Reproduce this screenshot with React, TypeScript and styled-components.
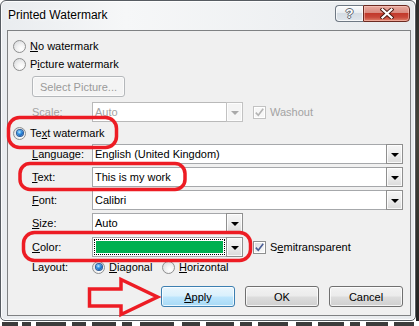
import React from "react";
import styled, { createGlobalStyle } from "styled-components";

const GlobalStyle = createGlobalStyle`
  html, body { margin: 0; padding: 0; background: #fff; }
  body {
    font-family: "Liberation Sans", Arial, sans-serif;
    font-size: 11px;
    color: #000;
    overflow: hidden;
  }
`;

const Page = styled.div`
  position: relative;
  width: 419px;
  height: 326px;
  overflow: hidden;
  display: grid;
  grid-template-columns: 416px 3px;
  grid-template-rows: 321px 5px;
  background: #fff;
`;

const Window = styled.div`
  box-sizing: border-box;
  border: 1px solid #575c62;
  border-radius: 6px 6px 5px 5px;
  background: linear-gradient(90deg, #e9ecef 0%, #f6f7f8 30%, #eef0f2 70%, #e7eaed 100%);
  box-shadow: inset 0 0 0 1px rgba(255, 255, 255, 0.85);
  display: flex;
  flex-direction: column;
  padding: 0 4px 4px 6px;
`;

const RightStrip = styled.div`
  background: linear-gradient(180deg, #2c2c2c, #46433a 40%, #222 100%);
`;

const BottomStrip = styled.div`
  grid-column: 1 / span 2;
  overflow: hidden;
  background: #fff;
  display: flex;
`;

const TitleBar = styled.div`
  height: 29px;
  display: flex;
  align-items: flex-start;
`;

const Title = styled.div`
  margin-left: 1px;
  font-size: 12px;
  line-height: 28px;
  color: #000;
  text-shadow: 0 0 6px #fff, 0 0 3px #fff;
`;

const CaptionGroup = styled.div`
  display: flex;
  margin: 4px 1px 0 auto;
`;

const HelpButton = styled.div`
  box-sizing: border-box;
  width: 28px;
  height: 17px;
  border: 1px solid #6e7883;
  border-right: none;
  border-radius: 4px 0 0 4px;
  background: linear-gradient(180deg, #fbfcfd 0%, #e9edf1 45%, #d5dce3 50%, #e0e6ec 100%);
  box-shadow: inset 0 0 0 1px rgba(255, 255, 255, 0.7);
  display: flex;
  align-items: center;
  justify-content: center;
  font-size: 13px;
  font-weight: bold;
  color: #fff;
  text-shadow: 1px 0 0 #5d6670, -1px 0 0 #5d6670, 0 1px 0 #5d6670, 0 -1px 0 #5d6670;
`;

const CloseButton = styled.div`
  box-sizing: border-box;
  width: 47px;
  height: 17px;
  border: 1px solid #6b2a22;
  border-radius: 0 4px 4px 0;
  background: linear-gradient(180deg, #e8aaa0 0%, #d98a7f 45%, #c2392b 50%, #c8483a 75%, #e0826c 100%);
  box-shadow: inset 0 0 0 1px rgba(255, 210, 200, 0.5);
  display: flex;
  align-items: center;
  justify-content: center;
`;

const Client = styled.div`
  flex: 1;
  box-sizing: border-box;
  border: 1px solid #7f8183;
  background: #f0f0f0;
  padding: 6px 7px 0 5px;
  display: flex;
  flex-direction: column;
`;

const RadioRow = styled.div<{ $mt?: number }>`
  height: 18px;
  margin-top: ${(p) => p.$mt ?? 0}px;
  display: flex;
  align-items: center;
  gap: 4px;
`;

const RadioDot = styled.span<{ $checked?: boolean }>`
  box-sizing: border-box;
  flex: none;
  width: 13px;
  height: 13px;
  border-radius: 50%;
  border: 1px solid #8e8f8f;
  background: radial-gradient(circle at 65% 70%, #ffffff 0%, #f4f4f4 35%, #d2d4d7 100%);
  display: flex;
  align-items: center;
  justify-content: center;
  &::after {
    content: "";
    display: ${(p) => (p.$checked ? "block" : "none")};
    width: 6px;
    height: 6px;
    border-radius: 50%;
    background: radial-gradient(circle at 40% 35%, #c9ecff 0%, #3b9be8 35%, #0d55b0 75%, #0a3a80 100%);
    box-shadow: 0 0 0 1px #2a5c9a;
  }
`;

const Text = styled.span<{ $disabled?: boolean }>`
  color: ${(p) => (p.$disabled ? "#a3a3a3" : "#000")};
  white-space: nowrap;
  line-height: 14px;
`;

const Indented = styled.div<{ $mt?: number }>`
  margin-top: ${(p) => p.$mt ?? 0}px;
  padding-left: 19px;
  display: flex;
`;

const PushButton = styled.div<{ $disabled?: boolean; $default?: boolean; $w: number }>`
  box-sizing: border-box;
  width: ${(p) => p.$w}px;
  height: 21px;
  border-radius: 3px;
  border: 1px solid ${(p) => (p.$disabled ? "#b5b8bb" : p.$default ? "#3c7fb1" : "#707070")};
  background: ${(p) =>
    p.$disabled
      ? "#f4f4f4"
      : p.$default
      ? "linear-gradient(180deg, #eaf6fd 0%, #d9f0fc 48%, #bee6fd 52%, #a7d9f5 100%)"
      : "linear-gradient(180deg, #f2f2f2 0%, #ebebeb 48%, #dddddd 52%, #cfcfcf 100%)"};
  box-shadow: inset 0 0 0 1px ${(p) => (p.$disabled ? "#fbfbfb" : "rgba(255,255,255,0.75)")};
  display: flex;
  align-items: center;
  justify-content: center;
  color: ${(p) => (p.$disabled ? "#9a9a9a" : "#000")};
  white-space: nowrap;
`;

const FieldRow = styled.div<{ $mt?: number; $h?: number }>`
  margin-top: ${(p) => p.$mt ?? 0}px;
  height: ${(p) => p.$h ?? 20}px;
  padding-left: 19px;
  display: flex;
  align-items: center;
`;

const Label = styled.span<{ $disabled?: boolean }>`
  flex: none;
  width: 60px;
  color: ${(p) => (p.$disabled ? "#a3a3a3" : "#000")};
  white-space: nowrap;
`;

const Combo = styled.div<{ $w?: number; $disabled?: boolean }>`
  box-sizing: border-box;
  ${(p) => (p.$w ? `width: ${p.$w}px; flex: none;` : "flex: 1;")}
  height: 20px;
  border: 1px solid ${(p) => (p.$disabled ? "#b9b9b9" : "#a6a8ab")};
  background: #fff;
  display: flex;
  align-items: stretch;
`;

const ComboValue = styled.div<{ $disabled?: boolean }>`
  flex: 1;
  padding-left: 2px;
  display: flex;
  align-items: center;
  white-space: nowrap;
  overflow: hidden;
  color: ${(p) => (p.$disabled ? "#a3a3a3" : "#000")};
`;

const SwatchFrame = styled.div`
  flex: 1;
  margin: 1px;
  border: 1px dotted #000;
  padding: 1px;
  display: flex;
`;

const Swatch = styled.div`
  flex: 1;
  background: #00b050;
`;

const DropButton = styled.div<{ $disabled?: boolean }>`
  box-sizing: border-box;
  flex: none;
  width: 17px;
  border: 1px solid ${(p) => (p.$disabled ? "#c2c2c2" : "#8f8f8f")};
  margin: -1px -1px -1px 0;
  background: ${(p) =>
    p.$disabled ? "#f4f4f4" : "linear-gradient(180deg, #f6f6f6 0%, #ececec 50%, #dadada 100%)"};
  box-shadow: inset 0 0 0 1px rgba(255, 255, 255, 0.8);
  display: flex;
  align-items: center;
  justify-content: center;
  &::after {
    content: "";
    margin-top: 2px;
    border-left: 4px solid transparent;
    border-right: 4px solid transparent;
    border-top: 4px solid ${(p) => (p.$disabled ? "#a8a8a8" : "#000")};
  }
`;

const CheckWrap = styled.div`
  display: flex;
  align-items: center;
  gap: 4px;
  margin-left: 10px;
`;

const CheckBox = styled.span<{ $disabled?: boolean }>`
  box-sizing: border-box;
  flex: none;
  width: 13px;
  height: 13px;
  border: 1px solid ${(p) => (p.$disabled ? "#c2c2c2" : "#8e8f8f")};
  background: ${(p) =>
    p.$disabled ? "#f7f7f7" : "linear-gradient(135deg, #d7dade 0%, #f0f1f2 60%, #fbfbfb 100%)"};
  box-shadow: inset 0 0 0 1px #fff;
  display: flex;
  align-items: center;
  justify-content: center;
`;

const LayoutOption = styled.div<{ $w?: number }>`
  display: flex;
  align-items: center;
  gap: 4px;
  ${(p) => (p.$w ? `width: ${p.$w}px;` : "")}
`;

const ButtonRow = styled.div`
  margin-top: 10px;
  display: flex;
  justify-content: flex-end;
  gap: 10px;
`;

const Overlay = styled.svg`
  position: absolute;
  left: 0;
  top: 0;
  pointer-events: none;
`;

const Check = ({ color }: { color: string }) => (
  <svg width="11" height="11" viewBox="0 0 11 11">
    <path d="M1.8 5.6 L4.3 8.3 L9.2 1.8" fill="none" stroke={color} strokeWidth="1.6" strokeLinejoin="miter" />
  </svg>
);

const CloseGlyph = () => (
  <svg width="14" height="11" viewBox="0 0 14 11">
    <path d="M2.5 1.5 L11.5 9.5 M11.5 1.5 L2.5 9.5" stroke="#4a1810" strokeWidth="4" strokeLinecap="square" />
    <path d="M2.5 1.5 L11.5 9.5 M11.5 1.5 L2.5 9.5" stroke="#ffffff" strokeWidth="2.2" strokeLinecap="square" />
  </svg>
);

/* blurred tops of the document text lying behind the dialog */
const marks: [number, number][] = [
  [2, 16], [22, 9], [36, 30], [72, 14], [92, 24], [122, 10], [140, 34], [182, 18],
  [206, 28], [240, 12], [258, 30], [296, 16], [318, 26], [350, 10], [366, 22], [394, 20],
];

const BackdropMarks = () => (
  <svg width="419" height="5" viewBox="0 0 419 5">
    {marks.map(([x, w]) => (
      <rect key={x} x={x} y={1} width={w} height={4} fill="#1a1a1a" opacity={0.85} />
    ))}
  </svg>
);

export default function App() {
  return (
    <>
      <GlobalStyle />
      <Page>
        <Window>
          <TitleBar>
            <Title>Printed Watermark</Title>
            <CaptionGroup>
              <HelpButton>?</HelpButton>
              <CloseButton>
                <CloseGlyph />
              </CloseButton>
            </CaptionGroup>
          </TitleBar>
          <Client>
            <RadioRow>
              <RadioDot />
              <Text>
                <u>N</u>o watermark
              </Text>
            </RadioRow>
            <RadioRow>
              <RadioDot />
              <Text>
                P<u>i</u>cture watermark
              </Text>
            </RadioRow>
            <Indented $mt={3}>
              <PushButton $disabled $w={93}>
                Select Picture...
              </PushButton>
            </Indented>
            <FieldRow $mt={5}>
              <Label $disabled>Scale:</Label>
              <Combo $w={151} $disabled>
                <ComboValue $disabled>Auto</ComboValue>
                <DropButton $disabled />
              </Combo>
              <CheckWrap>
                <CheckBox $disabled>
                  <Check color="#b4b4b4" />
                </CheckBox>
                <Text $disabled>Washout</Text>
              </CheckWrap>
            </FieldRow>
            <RadioRow $mt={2}>
              <RadioDot $checked />
              <Text>
                Te<u>x</u>t watermark
              </Text>
            </RadioRow>
            <FieldRow $mt={2}>
              <Label>
                <u>L</u>anguage:
              </Label>
              <Combo>
                <ComboValue>English (United Kingdom)</ComboValue>
                <DropButton />
              </Combo>
            </FieldRow>
            <FieldRow $mt={3}>
              <Label>
                <u>T</u>ext:
              </Label>
              <Combo>
                <ComboValue>This is my work</ComboValue>
                <DropButton />
              </Combo>
            </FieldRow>
            <FieldRow $mt={3}>
              <Label>
                <u>F</u>ont:
              </Label>
              <Combo>
                <ComboValue>Calibri</ComboValue>
                <DropButton />
              </Combo>
            </FieldRow>
            <FieldRow $mt={3}>
              <Label>
                <u>S</u>ize:
              </Label>
              <Combo $w={151}>
                <ComboValue>Auto</ComboValue>
                <DropButton />
              </Combo>
            </FieldRow>
            <FieldRow $mt={4}>
              <Label>
                <u>C</u>olor:
              </Label>
              <Combo $w={151}>
                <SwatchFrame>
                  <Swatch />
                </SwatchFrame>
                <DropButton />
              </Combo>
              <CheckWrap>
                <CheckBox>
                  <Check color="#4a5d94" />
                </CheckBox>
                <Text>
                  S<u>e</u>mitransparent
                </Text>
              </CheckWrap>
            </FieldRow>
            <FieldRow $mt={1} $h={18}>
              <Label>Layout:</Label>
              <LayoutOption $w={70}>
                <RadioDot $checked />
                <Text>
                  <u>D</u>iagonal
                </Text>
              </LayoutOption>
              <LayoutOption>
                <RadioDot />
                <Text>
                  <u>H</u>orizontal
                </Text>
              </LayoutOption>
            </FieldRow>
            <ButtonRow>
              <PushButton $default $w={74}>
                <span>
                  <u>A</u>pply
                </span>
              </PushButton>
              <PushButton $w={74}>OK</PushButton>
              <PushButton $w={74}>Cancel</PushButton>
            </ButtonRow>
          </Client>
        </Window>
        <RightStrip />
        <BottomStrip>
          <BackdropMarks />
        </BottomStrip>
        <Overlay width="419" height="326" viewBox="0 0 419 326">
          <g fill="none" stroke="#ed1c24" strokeWidth="3.5" strokeLinejoin="round">
            <rect x="8.5" y="117.5" width="108" height="30" rx="11" />
            <rect x="20" y="163.5" width="165" height="26" rx="10" />
            <rect x="23.5" y="232.5" width="227" height="28" rx="11" />
            <polygon
              points="89.5,289 121,289 121,279.5 157.5,297 121,314.5 121,306 89.5,306"
              strokeLinejoin="miter"
            />
          </g>
        </Overlay>
      </Page>
    </>
  );
}
